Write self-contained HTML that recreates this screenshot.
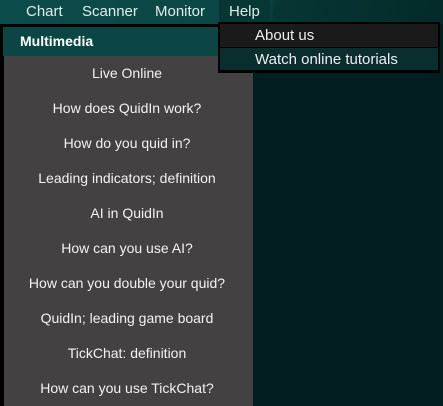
<!DOCTYPE html>
<html><head><style>
body{margin:0;width:443px;height:406px;overflow:hidden;background:#031e1e;font-family:"Liberation Sans",sans-serif;position:relative}
.bar{position:absolute;left:0;top:0;width:443px;height:24px;background:linear-gradient(100deg,#0c4c4a 0%,#0a4644 60%,#063634 62%,#042a29 100%)}
.m{position:absolute;top:3px;color:#e0ecec;font-size:15px}
.help{position:absolute;left:219px;top:0;width:51px;height:23px;background:#063735}
.panel{position:absolute;left:0;top:24px;width:253px;height:382px;background:#000}
.hdr{position:absolute;left:3px;top:27px;width:250px;height:29px;background:#0b4644;color:#fff;font-weight:bold;font-size:14px;line-height:29px;box-sizing:border-box;padding-left:17px}
.list{position:absolute;left:4px;top:56px;width:249px;height:350px;background:#434141}
.it{position:absolute;left:0;width:246px;text-align:center;color:#f2f2f2;font-size:14px}
.dd{position:absolute;left:218px;top:22px;width:222px;height:51px;background:#000}
.r1{position:absolute;left:220px;top:24px;width:218px;height:23px;background:#1b1a1a}
.r2{position:absolute;left:220px;top:48px;width:218px;height:22px;background:#0a2e2e}
.dt{position:absolute;left:255px;color:#eee;font-size:15px}
</style></head><body>
<div class="bar"></div>
<div class="help"></div>
<div class="m" style="left:26px">Chart</div>
<div class="m" style="left:82px">Scanner</div>
<div class="m" style="left:155px">Monitor</div>
<div class="m" style="left:229px">Help</div>
<div class="panel"></div>
<div class="hdr">Multimedia</div>
<div class="list">
<div class="it" style="top:9px">Live Online</div>
<div class="it" style="top:44px">How does QuidIn work?</div>
<div class="it" style="top:79px">How do you quid in?</div>
<div class="it" style="top:114px">Leading indicators; definition</div>
<div class="it" style="top:149px">AI in QuidIn</div>
<div class="it" style="top:184px">How can you use AI?</div>
<div class="it" style="top:219px">How can you double your quid?</div>
<div class="it" style="top:254px">QuidIn; leading game board</div>
<div class="it" style="top:289px">TickChat: definition</div>
<div class="it" style="top:324px">How can you use TickChat?</div>
</div>
<div class="dd"></div>
<div class="r1"></div>
<div class="r2"></div>
<div class="dt" style="top:27px">About us</div>
<div class="dt" style="top:51px">Watch online tutorials</div>
</body></html>
